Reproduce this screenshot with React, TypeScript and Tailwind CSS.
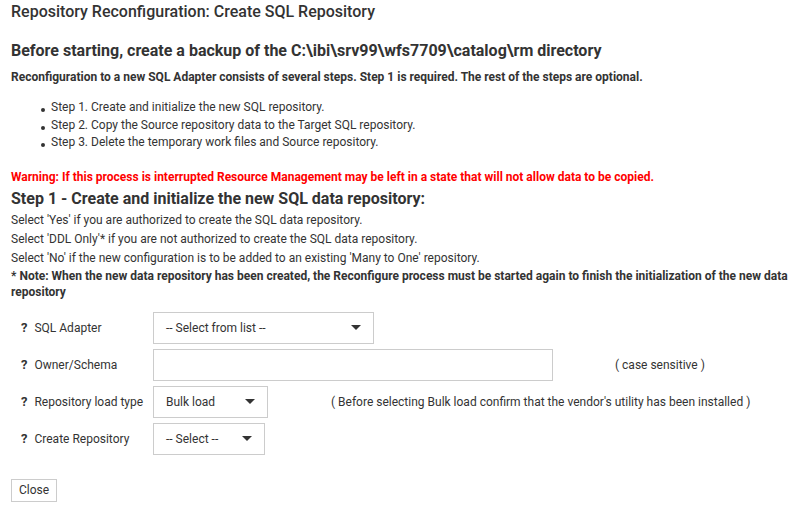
import React from "react";

const Caret = () => (
  <svg width="10" height="6" viewBox="0 0 10 6" className="shrink-0">
    <path d="M0 0 L10 0 L5 5 Z" fill="#333" />
  </svg>
);

const FieldLabel = ({ text }: { text: string }) => (
  <div className="w-[142px] shrink-0 pl-[10px] flex items-center gap-[7px]">
    <span className="font-bold text-[13px]">?</span>
    <span>{text}</span>
  </div>
);

const SelectBox = ({ value, width }: { value: string; width: string }) => (
  <div
    className={`${width} h-[32px] border border-[#cccccc] bg-white flex items-center justify-between pl-[12px] pr-[12px]`}
  >
    <span>{value}</span>
    <Caret />
  </div>
);

const steps = [
  "Step 1. Create and initialize the new SQL repository.",
  "Step 2. Copy the Source repository data to the Target SQL repository.",
  "Step 3. Delete the temporary work files and Source repository.",
];

export default function App() {
  return (
    <div className="w-[792px] h-[511px] bg-white text-[#333333] font-['Roboto','Liberation_Sans',sans-serif] pl-[11px] pr-[2px] overflow-hidden">
      <h1 className="text-[16px] leading-[24px] font-medium">
        Repository Reconfiguration: Create SQL Repository
      </h1>

      <h2 className="mt-[15px] text-[16px] leading-[24px] font-bold">
        Before starting, create a backup of the C:\ibi\srv99\wfs7709\catalog\rm directory
      </h2>

      <p className="mt-[6px] text-[12px] leading-[16px] font-bold">
        Reconfiguration to a new SQL Adapter consists of several steps. Step 1 is required. The rest of the steps are optional.
      </p>

      {/* steps */}
      <ul className="mt-[14px] pl-[30px] text-[12px] leading-[17.5px]">
        {steps.map((s) => (
          <li key={s} className="flex items-center gap-[6px]">
            <span className="w-[4px] h-[4px] rounded-full bg-[#333333] mt-[5px]" />
            <span>{s}</span>
          </li>
        ))}
      </ul>

      <p className="mt-[17px] text-[12px] leading-[16px] font-bold text-[#ff0000]">
        Warning: If this process is interrupted Resource Management may be left in a state that will not allow data to be copied.
      </p>

      <h3 className="mt-[2px] text-[16px] leading-[23px] font-bold">
        Step 1 - Create and initialize the new SQL data repository:
      </h3>

      <div className="pt-[1px] text-[12px] leading-[19px]">
        <div>Select 'Yes' if you are authorized to create the SQL data repository.</div>
        <div>Select 'DDL Only'* if you are not authorized to create the SQL data repository.</div>
        <div>Select 'No' if the new configuration is to be added to an existing 'Many to One' repository.</div>
      </div>

      <p className="text-[12px] leading-[16px] font-bold">
        * Note: When the new data repository has been created, the Reconfigure process must be started again to finish the initialization of the new data repository
      </p>

      {/* form */}
      <div className="mt-[12px] flex flex-col gap-[5px] text-[12px]">
        <div className="flex items-center">
          <FieldLabel text="SQL Adapter" />
          <SelectBox value="-- Select from list --" width="w-[221px]" />
        </div>
        <div className="flex items-center">
          <FieldLabel text="Owner/Schema" />
          <div className="w-[400px] h-[32px] border border-[#cccccc] bg-white" />
          <span className="ml-[62px]">( case sensitive )</span>
        </div>
        <div className="flex items-center">
          <FieldLabel text="Repository load type" />
          <SelectBox value="Bulk load" width="w-[115px]" />
          <span className="ml-[63px]">
            ( Before selecting Bulk load confirm that the vendor's utility has been installed )
          </span>
        </div>
        <div className="flex items-center">
          <FieldLabel text="Create Repository" />
          <SelectBox value="-- Select --" width="w-[112px]" />
        </div>
      </div>

      <button className="mt-[24px] h-[23px] w-[46px] border border-[#cccccc] bg-white text-[12px] text-[#333333]">
        Close
      </button>
    </div>
  );
}
